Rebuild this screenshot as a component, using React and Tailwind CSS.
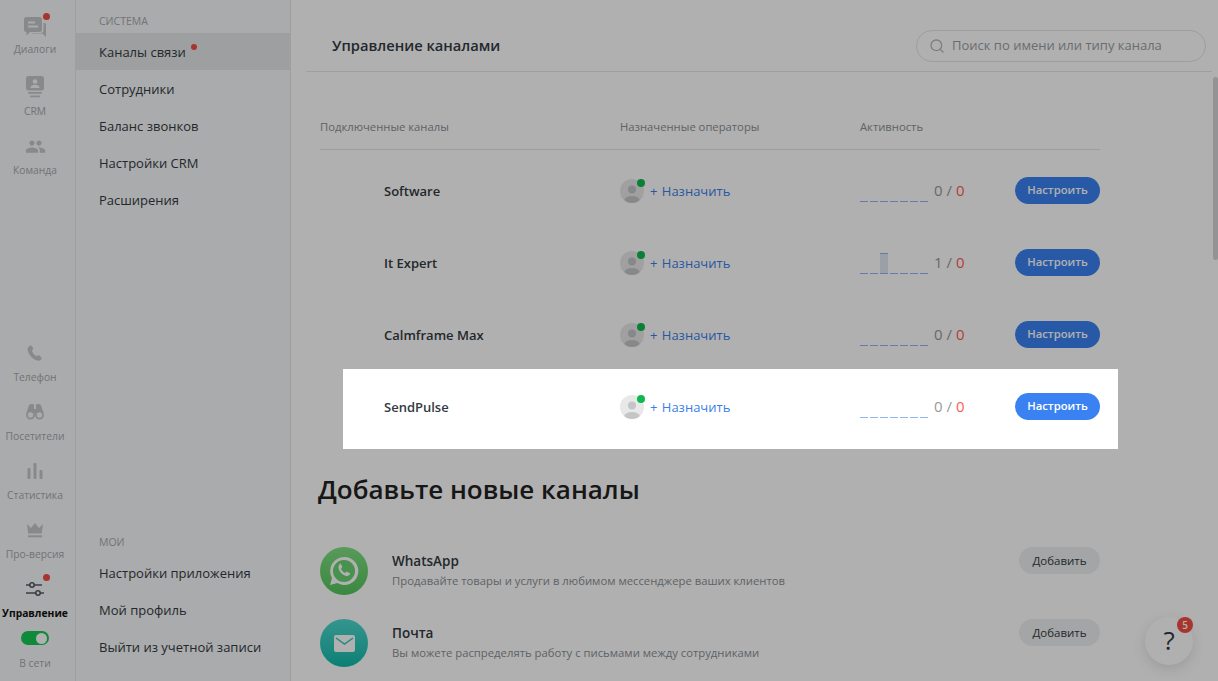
import React from 'react';
import { Search } from 'lucide-react';
import { MdPeople } from 'react-icons/md';

const DialogsIcon = () => (
  <svg width="24" height="24" viewBox="0 0 24 24" fill="currentColor">
    <path d="M3.5 1h13A2.5 2.5 0 0 1 19 3.5v10a2.5 2.5 0 0 1-2.5 2.5H7l-3.5 3.5V16A2.5 2.5 0 0 1 1 13.5v-10A2.5 2.5 0 0 1 3.5 1z" />
    <path d="M20.5 7h1A1.5 1.5 0 0 1 23 8.5V21l-3.5-3.5H9.5V17h8a3 3 0 0 0 3-3z" />
    <path d="M5 5.5h7v2H5zM5 9.5h10v2H5z" fill="#f7f8f9" />
  </svg>
);

const CrmIcon = () => (
  <svg width="20" height="22" viewBox="0 0 20 22" fill="currentColor">
    <rect x="1" y="0" width="18" height="14.5" rx="2.5" />
    <circle cx="10" cy="5.5" r="2.3" fill="#f7f8f9" />
    <path d="M5.5 12c0-2.2 2-3.2 4.5-3.2s4.5 1 4.5 3.2z" fill="#f7f8f9" />
    <rect x="3" y="16" width="14" height="1.8" rx=".9" />
    <rect x="5" y="19.5" width="10" height="1.8" rx=".9" />
  </svg>
);

const PhoneIcon = () => (
  <svg width="16" height="16" viewBox="0 0 16 16" fill="currentColor">
    <path d="M3.2 0.6c.6-.4 1.3-.2 1.7.4l1.2 2.2c.3.6.2 1.2-.3 1.6l-.9.8c.5 2.1 2.2 4.4 4.6 5.6l1-.7c.5-.4 1.2-.3 1.7.1l2 1.6c.6.5.6 1.2.2 1.8-.8 1.1-2 1.9-3.2 1.8C6.2 15.4 1 9.3.6 4.600.5 3 1.700 1.500 3.200.6z" />
  </svg>
);

const BinocularsIcon = () => (
  <svg width="18" height="16" viewBox="0 0 18 16">
    <path d="M2.500 2.500C3 .8 4.300 0 5.500 0h1C7.500 0 8 .7 8 1.500V5h2V1.500C10 .7 10.500 0 11.500 0h1c1.200 0 2.500.8 3 2.500L17.500 9h-17z" fill="currentColor" />
    <circle cx="4.500" cy="11" r="3.600" fill="#f7f8f9" stroke="currentColor" strokeWidth="1.800" />
    <circle cx="13.500" cy="11" r="3.600" fill="#f7f8f9" stroke="currentColor" strokeWidth="1.800" />
  </svg>
);

const StatsIcon = () => (
  <svg width="16" height="16" viewBox="0 0 16 16" fill="currentColor">
    <rect x="0.500" y="5" width="3" height="11" rx="1" />
    <rect x="6.500" y="0" width="3" height="16" rx="1" />
    <rect x="12.500" y="7" width="3" height="9" rx="1" />
  </svg>
);

const CrownIcon = () => (
  <svg width="16" height="15" viewBox="0 0 16 15" fill="currentColor">
    <path d="M0 1l4 4 4-5 4 5 4-4-1.200 9.500H1.200z" />
    <rect x="1" y="12.300" width="14" height="2" />
  </svg>
);

const SlidersIcon = () => (
  <svg width="18" height="18" viewBox="0 0 18 18" fill="none" stroke="currentColor" strokeWidth="1.600">
    <path d="M0 5h3.800M8.200 5H16" />
    <circle cx="6" cy="5" r="2.200" />
    <path d="M0 13h9.800M14.200 13H18" />
    <circle cx="12" cy="13" r="2.200" />
  </svg>
);

const NavItem = ({ icon, label, active, dot, className, labelClass }) => (
  <div className={`relative flex flex-col items-center ${className || ''}`}>
    <div className={`relative flex h-[24px] w-[24px] items-center justify-center ${active ? 'text-[#555b61]' : 'text-[#c4c7ca]'}`}>
      {icon}
      {dot && <span className="absolute -right-[3px] top-[-3px] h-[7px] w-[7px] rounded-full bg-[#f24c42]" />}
    </div>
    <span className={`whitespace-nowrap text-[10.3px] leading-[16px] ${labelClass || 'mt-[4px]'} ${active ? 'font-bold text-[#111]' : 'text-[#a5a8ac]'}`}>{label}</span>
  </div>
);

const MenuItem = ({ label, active, dot, nudge }) => (
  <div className={`flex h-[37px] items-center pl-[23px] text-[13px] text-[#333a42] ${nudge ? 'pt-[2px]' : ''} ${active ? 'bg-[#e5e6e8]' : ''}`}>
    <span className="relative">
      {label}
      {dot && <span className="absolute -right-[11px] top-[1px] h-[6px] w-[6px] rounded-full bg-[#f24c42]" />}
    </span>
  </div>
);

const Avatar = () => (
  <div className="relative h-[24px] w-[24px] shrink-0">
    <svg width="24" height="24" viewBox="0 0 24 24">
      <defs>
        <clipPath id="avatar-clip"><circle cx="12" cy="12" r="12" /></clipPath>
      </defs>
      <circle cx="12" cy="12" r="12" fill="#e8e8e9" />
      <g clipPath="url(#avatar-clip)" fill="#c4c5c7">
        <circle cx="12" cy="10.500" r="4" />
        <ellipse cx="12" cy="22" rx="8" ry="5" />
      </g>
    </svg>
    <span className="absolute right-[-1px] top-0 h-[8px] w-[8px] rounded-full bg-[#0fb84f]" />
  </div>
);

const Activity = ({ bar, count }) => (
  <div className="flex w-[155px] items-center">
    <div className="flex h-[22px] w-[68px] items-end gap-[2px]">
      {[0, 1, 2, 3, 4, 5, 6].map((i) => (
        <div
          key={i}
          className={`w-[8px] border-b border-[#90b6f2] ${i === bar ? 'h-[21px] border-t bg-[#dfe6f4]' : 'h-[1px]'}`}
        />
      ))}
    </div>
    <div className="ml-[6px] mb-[2px] text-[15px] leading-[20px] text-[#999]">
      {count} / <span className="text-[#ff5c54]">0</span>
    </div>
  </div>
);

const ChannelRow = ({ name, bar, count }) => (
  <div className="flex h-[72px] items-center">
    <div className="w-[300px] pl-[64px] pt-[2px] text-[13px] font-semibold text-[#333a42]">{name}</div>
    <div className="flex w-[240px] items-center gap-[6px]">
      <Avatar />
      <span className="pt-[2px] text-[13px] text-[#3a7fe8] [word-spacing:1px]">+ Назначить</span>
    </div>
    <Activity bar={bar} count={count} />
    <button type="button" className="mb-[1px] h-[27px] w-[85px] rounded-full bg-[#3a82f2] text-[11.3px] font-semibold text-white">
      Настроить
    </button>
  </div>
);

const AddRow = ({ icon, title, text }) => (
  <div className="flex h-[72px] items-start">
    {icon}
    <div className="ml-[24px] flex-1">
      <div className="mt-[4px] text-[13.5px] font-semibold leading-[20px] text-[#333a42]">{title}</div>
      <div className="text-[11.3px] leading-[20px] text-[#8a8f95]">{text}</div>
    </div>
    <button type="button" className="h-[27px] w-[81px] rounded-full bg-[#edf0f1] text-[11.5px] text-[#333a42]">
      Добавить
    </button>
  </div>
);

const WhatsAppIcon = () => (
  <svg width="34" height="34" viewBox="0 0 34 34">
    <path d="M17 3a14 14 0 0 0-12 21L3 31l7.300-1.900A14 14 0 1 0 17 3z" fill="#fff" />
    <circle cx="17" cy="17" r="11" fill="#6bd272" />
    <path d="M12.500 9.800c.6-.4 1.200-.2 1.500.4l1.100 2.300c.2.500.1 1-.3 1.400l-.8.800c.6 1.800 2.100 3.400 4.100 4.300l.9-.9c.4-.4.9-.5 1.400-.2l2.200 1.200c.6.300.7 1 .3 1.500-.8 1-2 1.500-3.100 1.400-4.100-.4-8-4.500-8.300-8.500-.1-1.400.5-2.700 1.500-3.500z" fill="#fff" />
  </svg>
);

export default function App() {
  return (
    <div className="relative flex h-[681px] w-[1218px] overflow-hidden bg-white font-['Open_Sans',sans-serif]">
      <aside className="flex h-full w-[76px] shrink-0 flex-col border-r border-[#e6e7e9] bg-[#f7f8f9] pt-[16px] pr-[5px] pb-[10px]">
        <NavItem icon={<DialogsIcon />} label="Диалоги" dot labelClass="mt-[1px]" />
        <NavItem icon={<CrmIcon />} label="CRM" className="mt-[18px]" />
        <NavItem icon={<MdPeople size={21} />} label="Команда" className="mt-[15px]" />
        <NavItem icon={<PhoneIcon />} label="Телефон" className="mt-auto" />
        <NavItem icon={<BinocularsIcon />} label="Посетители" className="mt-[15px]" />
        <NavItem icon={<StatsIcon />} label="Статистика" className="mt-[15px]" />
        <NavItem icon={<CrownIcon />} label="Про-версия" className="mt-[15px]" />
        <NavItem icon={<SlidersIcon />} label="Управление" active dot className="mt-[15px]" />
        <div className="mt-[10px] flex flex-col items-center">
          <div className="flex h-[14px] w-[28px] items-center justify-end rounded-full bg-[#15c955] pr-[2px]">
            <span className="h-[11px] w-[11px] rounded-full bg-white" />
          </div>
          <span className="mt-[10px] text-[10.3px] leading-[16px] text-[#a5a8ac]">В сети</span>
        </div>
      </aside>

      <nav className="flex h-full w-[215px] shrink-0 flex-col border-r border-[#e6e7e9] bg-[#f7f8f9] pt-[13px] pb-[15px]">
        <div className="pl-[23px] text-[10.5px] leading-[16px] text-[#a5a8ac]">СИСТЕМА</div>
        <div className="mt-[4px]">
          <MenuItem label="Каналы связи" active dot nudge />
          <MenuItem label="Сотрудники" nudge />
          <MenuItem label="Баланс звонков" nudge />
          <MenuItem label="Настройки CRM" nudge />
          <MenuItem label="Расширения" nudge />
        </div>
        <div className="mt-auto pl-[23px] text-[10.5px] leading-[16px] text-[#a5a8ac]">МОИ</div>
        <div className="mt-[5px]">
          <MenuItem label="Настройки приложения" />
          <MenuItem label="Мой профиль" />
          <MenuItem label="Выйти из учетной записи" />
        </div>
      </nav>

      <main className="relative h-full flex-1">
        <header className="ml-[15px] mr-[6px] flex h-[72px] items-center justify-between border-b border-[#e6e7e9] pt-[21px] pr-[6px] pl-[26px]">
          <h1 className="mb-[1px] text-[14.7px] font-semibold text-[#333a42]">Управление каналами</h1>
          <div className="flex h-[32px] w-[290px] items-center rounded-full border border-[#e3e5e7] pl-[12px]">
            <Search size={16} className="text-[#b5b8bc]" />
            <span className="ml-[7px] text-[13px] text-[#9a9ea3]">Поиск по имени или типу канала</span>
          </div>
        </header>

        <section className="ml-[29px] w-[780px]">
          <div className="mt-[34px] flex h-[44px] border-b border-[#e3e5e7] text-[11.25px] leading-[42px] text-[#8a8f95]">
            <span className="w-[300px]">Подключенные каналы</span>
            <span className="w-[240px]">Назначенные операторы</span>
            <span>Активность</span>
          </div>
          <div className="mt-[5px]">
            <ChannelRow name="Software" count="0" />
            <ChannelRow name="It Expert" bar={2} count="1" />
            <ChannelRow name="Calmframe Max" count="0" />
            <ChannelRow name="SendPulse" count="0" />
          </div>
          <h2 className="ml-[-2px] mt-[28px] text-[26px] font-semibold leading-[36px] text-[#222]">Добавьте новые каналы</h2>
          <div className="mt-[40px]">
            <AddRow
              icon={
                <div className="flex h-[48px] w-[48px] shrink-0 items-center justify-center rounded-full bg-gradient-to-b from-[#80e083] to-[#55c55e]">
                  <WhatsAppIcon />
                </div>
              }
              title="WhatsApp"
              text="Продавайте товары и услуги в любимом мессенджере ваших клиентов"
            />
            <AddRow
              icon={
                <div className="flex h-[48px] w-[48px] shrink-0 items-center justify-center rounded-full bg-gradient-to-b from-[#4bd9cf] to-[#0ab9a8]">
                  <svg width="21" height="17" viewBox="0 0 21 17">
                    <rect width="21" height="17" rx="2" fill="#fff" />
                    <path d="M2 3l8.500 6L19 3" fill="none" stroke="#2fc9bc" strokeWidth="1.500" />
                  </svg>
                </div>
              }
              title="Почта"
              text="Вы можете распределять работу с письмами между сотрудниками"
            />
          </div>
        </section>

        <div className="absolute right-0 top-[77px] h-[183px] w-[5px] rounded-full bg-[#d5d6da]" />

        <div className="absolute left-[854px] top-[617px] flex h-[48px] w-[48px] items-center justify-center rounded-full bg-white pb-[3px] text-[26px] leading-none text-[#333a42] shadow-[0_4px_14px_rgba(0,0,0,0.12)]">
          ?
          <span className="absolute right-0 top-0 flex h-[16px] w-[16px] items-center justify-center rounded-full bg-[#f24c42] text-[10px] font-semibold text-white">5</span>
        </div>
      </main>

      {/* dim everything except the highlighted row */}
      <div className="pointer-events-none absolute left-[343px] top-[369px] h-[80px] w-[775px] shadow-[0_0_0_1400px_rgba(0,0,0,0.31)]" />
    </div>
  );
}
